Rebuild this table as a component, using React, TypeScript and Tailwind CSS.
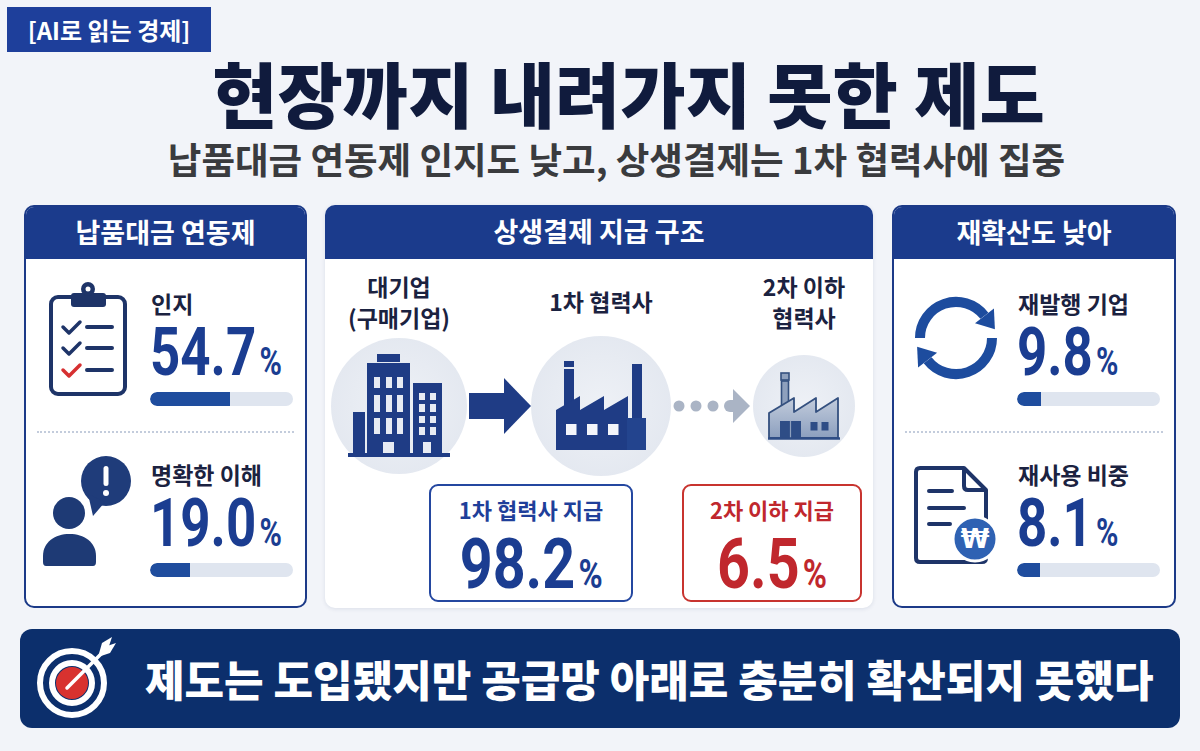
import React from 'react';

const NAVY = '#1f3c85';

function Clipboard() {
  return (
    <svg width="78" height="120" viewBox="0 0 78 120" fill="none">
      <rect x="2" y="18" width="74" height="97" rx="7" stroke="#1e3468" strokeWidth="4" />
      <rect x="22" y="14" width="35" height="14" rx="3" fill="#1e3468" />
      <circle cx="39" cy="10" r="7" fill="#1e3468" />
      <circle cx="39" cy="10" r="2.5" fill="#fff" />
      <path d="M14 48 L20 54 L31 43" stroke="#1e3468" strokeWidth="3.5" strokeLinecap="round" strokeLinejoin="round" />
      <path d="M14 69 L20 75 L31 64" stroke="#1e3468" strokeWidth="3.5" strokeLinecap="round" strokeLinejoin="round" />
      <path d="M14 91 L20 97 L31 86" stroke="#d63031" strokeWidth="3.5" strokeLinecap="round" strokeLinejoin="round" />
      <path d="M38 48 H63 M38 69 H63 M38 91 H63" stroke="#1e3468" strokeWidth="4" strokeLinecap="round" />
    </svg>
  );
}

function PersonAlert() {
  return (
    <svg width="90" height="111" viewBox="0 0 90 111">
      <circle cx="26" cy="57" r="16" fill="#1e3a75" />
      <path d="M3 110 Q0 110 0 106 L0 100 C0 86 12 78 26.5 78 C41 78 53 86 53 100 L53 106 Q53 110 50 110 Z" fill="#1e3a75" />
      <circle cx="63" cy="25" r="25" fill="#1f3c7a" />
      <polygon points="45,38 50,60 62,46" fill="#1f3c7a" />
      <rect x="60.5" y="10" width="5" height="20" rx="2.5" fill="#fff" />
      <circle cx="63" cy="37" r="3" fill="#fff" />
    </svg>
  );
}

function Refresh() {
  return (
    <svg width="88" height="88" viewBox="0 0 88 88" fill="none">
      <path d="M8 44 A36 36 0 0 1 72.4 21.8" stroke="#1d4c9e" strokeWidth="10" />
      <polygon points="81.9,14.4 63,29.2 82.9,35.2" fill="#1d4c9e" />
      <path d="M80 44 A36 36 0 0 1 15.6 66.2" stroke="#1d4c9e" strokeWidth="10" />
      <polygon points="6.1,73.6 25.1,58.8 5.1,52.8" fill="#1d4c9e" />
    </svg>
  );
}

function DocWon() {
  return (
    <svg width="86" height="100" viewBox="0 0 86 100" fill="none">
      <path d="M7 3 H51 L73 25 V93 Q73 97 69 97 H7 Q3 97 3 93 V7 Q3 3 7 3 Z" stroke="#1e3468" strokeWidth="4" fill="#fff" strokeLinejoin="round" />
      <path d="M51 3 V21 Q51 25 55 25 H73" stroke="#1e3468" strokeWidth="4" strokeLinejoin="round" />
      <path d="M16 26 H39 M16 43 H51 M16 59 H37" stroke="#1e3468" strokeWidth="4" strokeLinecap="round" />
      <circle cx="62" cy="74" r="22" fill="#2f62b3" stroke="#fff" strokeWidth="3" />
      <text x="62" y="83" textAnchor="middle" fontSize="26" fontWeight="700" fill="#fff" fontFamily="DejaVu Sans, sans-serif">₩</text>
    </svg>
  );
}

function Building() {
  return (
    <svg width="102" height="104" viewBox="0 0 102 104">
      <rect x="0" y="99" width="102" height="4" fill={NAVY} />
      <rect x="5" y="58" width="12" height="41" fill={NAVY} />
      <rect x="19" y="9" width="43" height="90" fill={NAVY} />
      <rect x="29" y="0" width="23" height="8" fill={NAVY} />
      <rect x="65" y="29" width="29" height="70" fill={NAVY} />
      <g fill="#e7ebf3">
        <rect x="26" y="23" width="6" height="11" />
        <rect x="38" y="23" width="6" height="11" />
        <rect x="49" y="23" width="6" height="11" />
        <rect x="26" y="41" width="6" height="17" />
        <rect x="38" y="41" width="6" height="17" />
        <rect x="49" y="41" width="6" height="17" />
        <rect x="26" y="64" width="6" height="16" />
        <rect x="38" y="64" width="6" height="16" />
        <rect x="49" y="64" width="6" height="16" />
        <rect x="35" y="88" width="11" height="11" />
        <rect x="71" y="39" width="6" height="7" />
        <rect x="82" y="39" width="6" height="7" />
        <rect x="71" y="50" width="6" height="8" />
        <rect x="82" y="50" width="6" height="8" />
        <rect x="71" y="62" width="6" height="7" />
        <rect x="82" y="62" width="6" height="7" />
        <rect x="71" y="73" width="6" height="8" />
        <rect x="82" y="73" width="6" height="8" />
        <rect x="75" y="88" width="8" height="11" />
      </g>
    </svg>
  );
}

function Factory() {
  return (
    <svg width="92" height="92" viewBox="0 0 92 92">
      <rect x="9" y="1" width="10" height="6" fill={NAVY} />
      <rect x="9" y="9" width="10" height="40" fill={NAVY} />
      <rect x="77" y="4" width="10" height="54" fill={NAVY} />
      <polygon points="1,50 25,36 25,50 49,36 49,50 73,36 73,90 1,90" fill={NAVY} />
      <rect x="72" y="58" width="19" height="32" fill="#23448e" />
      <g fill="#f3f5fa">
        <rect x="11" y="64" width="10.5" height="11" />
        <rect x="32" y="64" width="10.5" height="11" />
        <rect x="53" y="64" width="10.5" height="11" />
      </g>
    </svg>
  );
}

function SmallFactory() {
  return (
    <svg width="72" height="70" viewBox="0 0 72 70">
      <defs>
        <linearGradient id="sf" x1="0" y1="0" x2="0" y2="1">
          <stop offset="0" stopColor="#c2ccdc" />
          <stop offset="1" stopColor="#8c9fbe" />
        </linearGradient>
      </defs>
      <rect x="13" y="2" width="8" height="7" fill="#8ea0bd" stroke="#34507f" strokeWidth="1.6" />
      <rect x="13.5" y="10" width="7" height="24" fill="#8ea0bd" stroke="#34507f" strokeWidth="1.6" />
      <polygon points="1,42 26,27 26,41 48,27 48,41 70,27 70,67 1,67" fill="url(#sf)" stroke="#34507f" strokeWidth="1.8" strokeLinejoin="round" />
      <rect x="12" y="50" width="21" height="17" fill="#2e4d86" />
      <line x1="22.5" y1="50" x2="22.5" y2="67" stroke="#8ea0bd" strokeWidth="1.2" />
      <rect x="42.5" y="51" width="7" height="8.5" fill="#2e4d86" />
      <rect x="53.5" y="51" width="7" height="8.5" fill="#2e4d86" />
      <line x1="0" y1="67.5" x2="72" y2="67.5" stroke="#2e4d86" strokeWidth="2.5" />
    </svg>
  );
}

function BigArrow() {
  return (
    <svg width="62" height="56" viewBox="0 0 62 56">
      <rect x="0" y="15" width="36" height="26" fill={NAVY} />
      <polygon points="35,0 62,28 35,56" fill={NAVY} />
    </svg>
  );
}

function DotArrow() {
  return (
    <svg width="78" height="36" viewBox="0 0 78 36">
      <g fill="#aab4c5">
        <circle cx="6" cy="18" r="5.5" />
        <circle cx="23" cy="18" r="5.5" />
        <circle cx="40" cy="18" r="5.5" />
        <rect x="51" y="12" width="12" height="12" rx="6" />
        <rect x="57" y="12" width="6" height="12" />
        <polygon points="60,1 77,18 60,35" />
      </g>
    </svg>
  );
}

function Target() {
  return (
    <svg width="84" height="86" viewBox="0 0 84 86" fill="none">
      <circle cx="38" cy="48" r="32" stroke="#fff" strokeWidth="6" />
      <circle cx="38" cy="48" r="20" stroke="#fff" strokeWidth="6" />
      <circle cx="38" cy="48" r="16" fill="#d8322f" />
      <path d="M33 53 L68 18" stroke="#fff" strokeWidth="3.5" strokeLinecap="round" />
      <polygon points="64,22 68,8 78,2 74,14" fill="#fff" />
      <polygon points="64,22 76,18 82,8 70,12" fill="#fff" />
    </svg>
  );
}

function Stat({ label, value, fill }: { label: string; value: string; fill: string }) {
  return (
    <div className="w-[143px]">
      <div className="pl-[1px] text-[23px] font-bold leading-[28px] text-[#1b2240] whitespace-nowrap">{label}</div>
      <div className="mt-[3px] h-[66px] whitespace-nowrap font-['Roboto',sans-serif] text-[66px] font-bold leading-none text-[#1b3d91]">
        <span className="inline-block origin-left scale-x-[0.8]">
          {value}
          <span className="ml-[4px] text-[38px]">%</span>
        </span>
      </div>
      <div className="mt-[6px] h-[14px] overflow-hidden rounded-full bg-[#dfe5ef]">
        <div className={`h-full rounded-l-full bg-[#1f4d9e] ${fill}`} />
      </div>
    </div>
  );
}

function CardHeader({ title }: { title: string }) {
  return (
    <div className="flex h-[52px] items-center justify-center bg-[#1b3b8c] text-[27px] font-bold text-white">
      {title}
    </div>
  );
}

function Divider() {
  return <div className="mx-[11px] mt-[25px] mb-[27px] border-t-2 border-dotted border-[#c3ccdc]" />;
}

export default function App() {
  return (
    <div className="flex h-[751px] w-[1200px] flex-col overflow-hidden bg-[#f2f4f9] font-['Noto_Sans_CJK_KR',sans-serif]">
      <div className="pl-[7px] pt-[7px]">
        <div className="flex h-[45px] w-[204px] items-center justify-center bg-[#1e3f9b] text-[24px] font-bold text-white">
          [AI로 읽는 경제]
        </div>
      </div>

      <h1 className="mt-[4px] pl-[57px] text-center text-[71px] font-black leading-none text-[#101b3d]">
        현장까지 내려가지 못한 제도
      </h1>
      <p className="mt-[14px] pl-[33px] text-center text-[36.5px] font-bold leading-none text-[#3a3b3e]">
        납품대금 연동제 인지도 낮고, 상생결제는 1차 협력사에 집중
      </p>

      <div className="mt-[27px] ml-[24px] flex h-[403px]">
        {/* 납품대금 연동제 */}
        <div className="flex w-[283px] flex-col overflow-hidden rounded-[10px] border-2 border-[#1c3a88] bg-white">
          <CardHeader title="납품대금 연동제" />
          <div className="pt-[30px]">
            <div className="flex items-start">
              <div className="-mt-[10px] flex w-[124px] justify-center">
                <Clipboard />
              </div>
              <Stat label="인지" value="54.7" fill="w-[56%]" />
            </div>
            <Divider />
            <div className="flex items-start">
              <div className="-mt-[4px] flex w-[124px] justify-center">
                <PersonAlert />
              </div>
              <Stat label="명확한 이해" value="19.0" fill="w-[28%]" />
            </div>
          </div>
        </div>

        {/* 상생결제 지급 구조 */}
        <div className="ml-[18px] flex w-[548px] flex-col overflow-hidden rounded-[10px] bg-white shadow-[0_1px_4px_rgba(20,40,90,0.10)]">
          <div className="flex h-[54px] items-center justify-center bg-[#1b3b8c] text-[27px] font-bold text-white">
            상생결제 지급 구조
          </div>
          <div className="mt-[12px] flex h-[62px] pl-[6px] text-[23px] font-bold leading-[31px] text-[#1b2240]">
            <div className="flex w-[136px] flex-col items-center justify-center">
              <span>대기업</span>
              <span>(구매기업)</span>
            </div>
            <div className="w-[64px]" />
            <div className="flex w-[140px] items-center justify-center">1차 협력사</div>
            <div className="w-[82px]" />
            <div className="flex w-[102px] flex-col items-center justify-center whitespace-nowrap">
              <span>2차 이하</span>
              <span>협력사</span>
            </div>
          </div>
          <div className="mt-[1px] flex h-[144px] items-center pl-[6px]">
            <div className="flex h-[136px] w-[136px] items-center justify-center rounded-full bg-[radial-gradient(circle,#eef1f6_0%,#e0e5ee_100%)]">
              <Building />
            </div>
            <div className="ml-[2px] flex">
              <BigArrow />
            </div>
            <div className="flex h-[140px] w-[140px] items-center justify-center rounded-full bg-[radial-gradient(circle,#eef1f6_0%,#e0e5ee_100%)]">
              <Factory />
            </div>
            <div className="ml-[2px] flex">
              <DotArrow />
            </div>
            <div className="ml-[2px] flex h-[102px] w-[102px] items-center justify-center rounded-full bg-[radial-gradient(circle,#eef1f6_0%,#e0e5ee_100%)]">
              <SmallFactory />
            </div>
          </div>
          <div className="mt-[6px] flex gap-[49px] pl-[104px]">
            <div className="flex h-[118px] w-[204px] flex-col items-center rounded-[9px] border-2 border-[#2447a0] bg-white">
              <div className="mt-[10px] text-[22px] font-bold leading-[26px] text-[#1f3f9a]">1차 협력사 지급</div>
              <div className="mt-[7px] whitespace-nowrap font-['Roboto',sans-serif] text-[70px] font-bold leading-none text-[#1b3d91]">
                <span className="inline-block scale-x-[0.82]">
                  98.2<span className="ml-[4px] text-[40px]">%</span>
                </span>
              </div>
            </div>
            <div className="flex h-[118px] w-[180px] flex-col items-center rounded-[9px] border-2 border-[#c8342f] bg-white">
              <div className="mt-[10px] text-[22px] font-bold leading-[26px] text-[#c0272d]">2차 이하 지급</div>
              <div className="mt-[7px] whitespace-nowrap font-['Roboto',sans-serif] text-[70px] font-bold leading-none text-[#c0272d]">
                <span className="inline-block scale-x-[0.82]">
                  6.5<span className="ml-[4px] text-[40px]">%</span>
                </span>
              </div>
            </div>
          </div>
        </div>

        {/* 재확산도 낮아 */}
        <div className="ml-[19px] flex w-[284px] flex-col overflow-hidden rounded-[10px] border-2 border-[#1c3a88] bg-white">
          <CardHeader title="재확산도 낮아" />
          <div className="pt-[30px]">
            <div className="flex items-start">
              <div className="mt-[5px] flex w-[123px] justify-center">
                <Refresh />
              </div>
              <Stat label="재발행 기업" value="9.8" fill="w-[17%]" />
            </div>
            <Divider />
            <div className="flex items-start">
              <div className="mt-[5px] flex w-[123px] justify-center">
                <DocWon />
              </div>
              <Stat label="재사용 비중" value="8.1" fill="w-[16%]" />
            </div>
          </div>
        </div>
      </div>

      <div className="mx-[20px] mt-[21px] flex h-[99px] items-center rounded-[12px] bg-[#0c2f6c]">
        <div className="ml-[14px] flex">
          <Target />
        </div>
        <div className="ml-[27px] whitespace-nowrap text-[43px] font-black leading-none text-white">
          제도는 도입됐지만 공급망 아래로 충분히 확산되지 못했다
        </div>
      </div>
    </div>
  );
}
